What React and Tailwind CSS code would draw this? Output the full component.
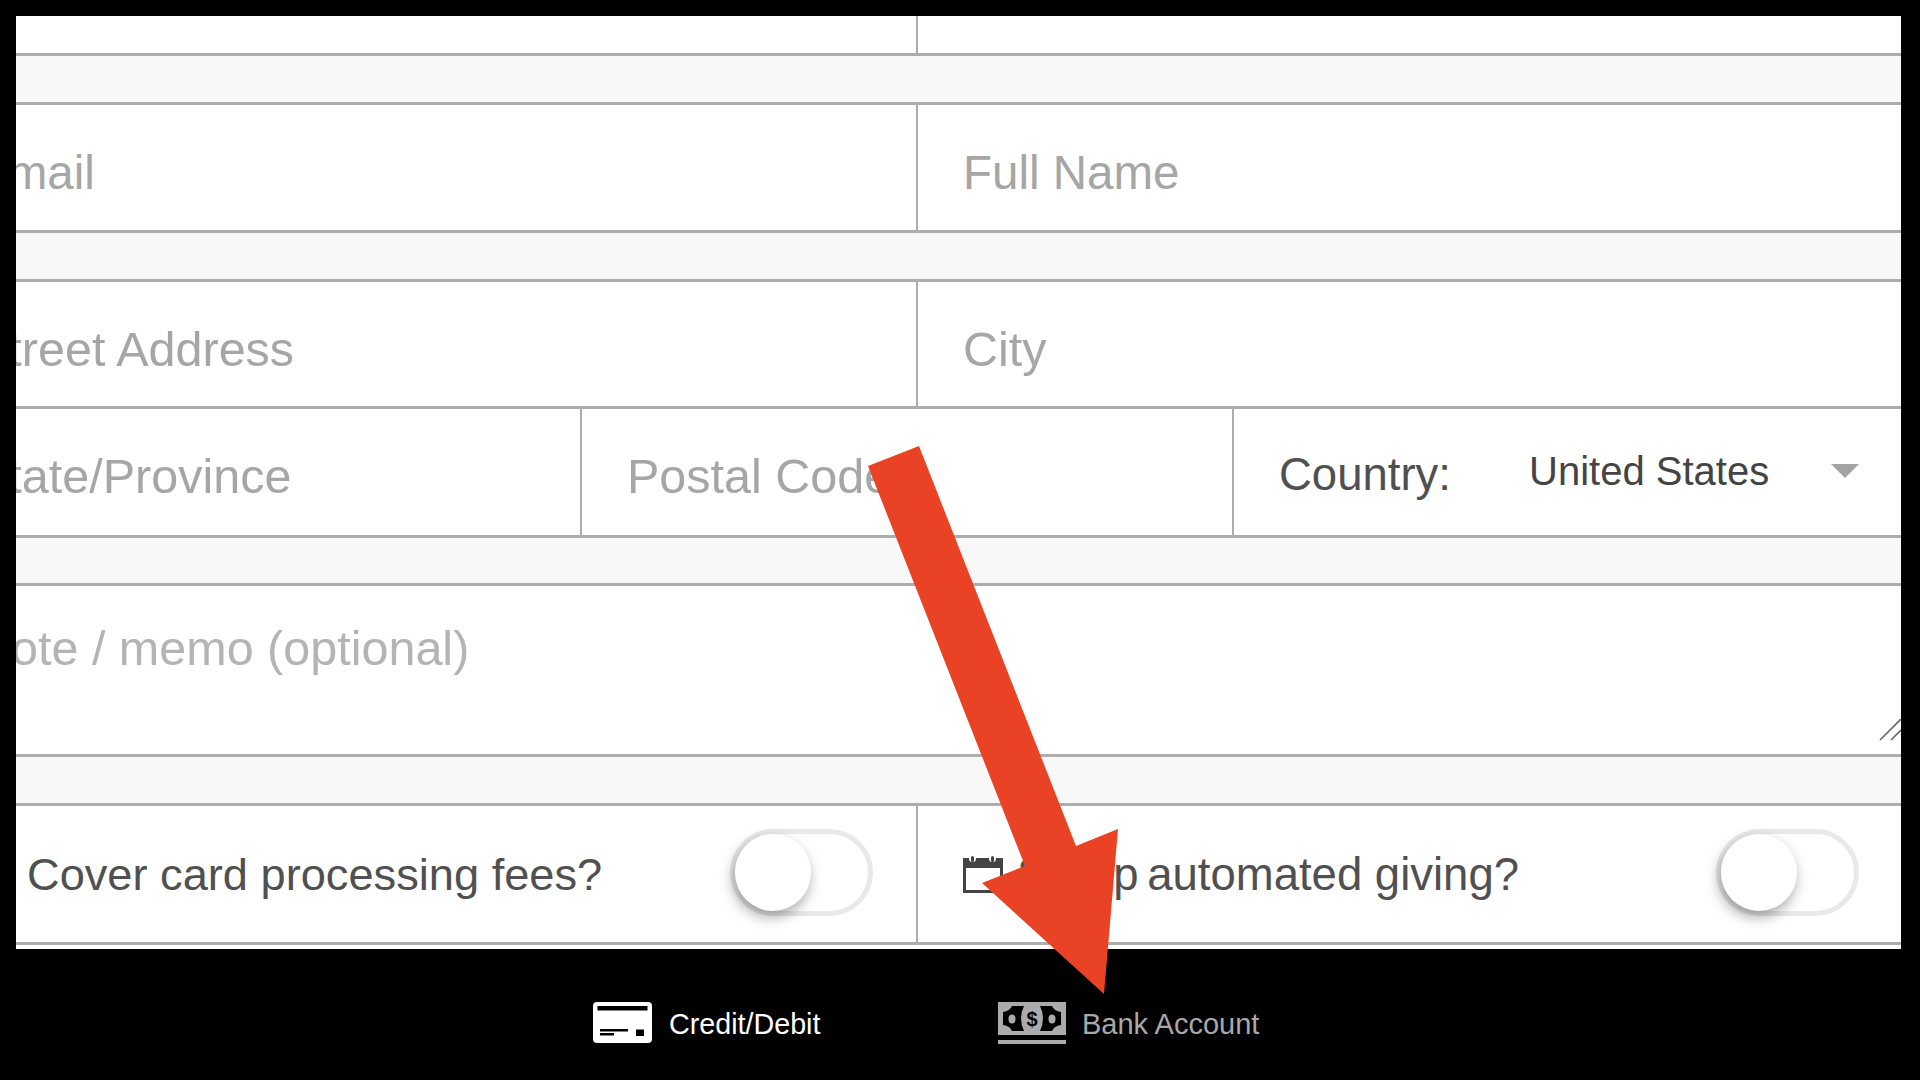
const font = { fontFamily: '"Liberation Sans", Arial, sans-serif' };

function Gap({ h }) {
  return <div className={`bg-[#f8f8f8] border-b-[3px] border-[#adadad] ${h}`} />;
}

function Toggle({ className }) {
  return (
    <div className={`relative w-[143px] h-[87px] shrink-0 rounded-full border-[5px] border-[#e9e9e9] bg-white ${className}`}>
      <div className="absolute left-0 top-0 w-[76px] h-[77px] rounded-full bg-white shadow-[-2px_6px_14px_rgba(0,0,0,0.35)]" />
    </div>
  );
}

function CardIcon() {
  return (
    <svg width="59" height="41" viewBox="0 0 59 41" className="shrink-0">
      <rect width="59" height="41" rx="4" fill="#fff" />
      <rect x="4.5" y="4" width="50" height="4.5" fill="#000" />
      <rect x="7" y="27" width="28" height="2.5" fill="#000" />
      <rect x="7" y="31" width="14" height="2.5" fill="#000" />
      <rect x="43" y="27.5" width="8" height="6.5" fill="#000" />
    </svg>
  );
}

function BankIcon() {
  return (
    <svg width="68" height="42" viewBox="0 0 68 42" className="shrink-0">
      <rect width="68" height="33" fill="#ababab" />
      <rect y="38" width="68" height="4" fill="#ababab" />
      <path d="M5 10 Q12 9 14 4 L26 4 Q20 16 26 29 L14 29 Q12 24 5 23 Z" fill="#000" />
      <path d="M63 10 Q56 9 54 4 L42 4 Q48 16 42 29 L54 29 Q56 24 63 23 Z" fill="#000" />
      <ellipse cx="14" cy="17" rx="3.5" ry="4.5" fill="#ababab" />
      <ellipse cx="54" cy="17" rx="3.5" ry="4.5" fill="#ababab" />
      <text x="34" y="24" textAnchor="middle" fontSize="20" fontWeight="700" fill="#000" fontFamily="Liberation Sans">$</text>
    </svg>
  );
}

function CalendarIcon() {
  return (
    <svg width="40" height="38" viewBox="0 0 40 38" className="shrink-0">
      <path d="M0 3H40V38H0Z" fill="#444" />
      <rect x="3" y="13" width="34" height="22" fill="#fff" />
      <circle cx="9.5" cy="3.5" r="3.5" fill="#fff" />
      <circle cx="29.5" cy="3.5" r="3.5" fill="#fff" />
      <rect x="8" y="1" width="3" height="6" rx="1.5" fill="#444" />
      <rect x="28" y="1" width="3" height="6" rx="1.5" fill="#444" />
    </svg>
  );
}

export default function App() {
  return (
    <div className="relative w-[1920px] h-[1080px] bg-black overflow-hidden" style={font}>
      <div className="pt-[16px] pl-[16px]">
        <div className="w-[1885px] h-[933px] bg-white overflow-hidden">
          <div className="-ml-[86px] w-[1971px]">
            <div className="flex h-[40px] border-b-[3px] border-[#adadad]">
              <div className="w-[988px] border-r-[2px] border-[#adadad]" />
            </div>
            <Gap h="h-[49px]" />
            <div className="flex h-[128px] border-b-[3px] border-[#adadad] text-[47.5px] text-[#a6a6a6]">
              <div className="w-[988px] border-r-[2px] border-[#adadad] pl-[46px] pt-[10px] flex items-center">Email</div>
              <div className="flex-1 pl-[45px] pt-[10px] flex items-center">Full Name</div>
            </div>
            <Gap h="h-[49px]" />
            <div className="flex h-[127px] border-b-[3px] border-[#adadad] text-[48.5px] text-[#a6a6a6]">
              <div className="w-[988px] border-r-[2px] border-[#adadad] pl-[46px] pt-[10px] flex items-center">Street Address</div>
              <div className="flex-1 pl-[45px] pt-[10px] flex items-center">City</div>
            </div>
            <div className="flex h-[129px] border-b-[3px] border-[#adadad] text-[48.5px] text-[#a6a6a6]">
              <div className="w-[652px] border-r-[2px] border-[#adadad] pl-[46px] pt-[8px] flex items-center">State/Province</div>
              <div className="w-[652px] border-r-[2px] border-[#adadad] pl-[45px] pt-[8px] flex items-center">Postal Code</div>
              <div className="flex-1 flex items-center pl-[45px] text-[#505050]">
                <span className="text-[45.5px] w-[250px] pt-[6px]">Country:</span>
                <span className="text-[40px] text-[#444] w-[302px] -mt-[2px]">United States</span>
                <span className="w-0 h-0 border-x-[14px] border-x-transparent border-t-[14px] border-t-[#a3a3a3] -mt-[2px]" />
              </div>
            </div>
            <Gap h="h-[48px]" />
            <div className="relative h-[171px] border-b-[3px] border-[#adadad] pl-[46px] pt-[29px] text-[48.5px] leading-[66px] text-[#b4b4b4]">
              Note / memo (optional)
              <svg width="22" height="22" viewBox="0 0 22 22" className="absolute right-0 top-[133px]">
                <path d="M1 21L22 0M12 21L22 11" stroke="#666" strokeWidth="1.6" fill="none" />
              </svg>
            </div>
            <Gap h="h-[49px]" />
            <div className="flex h-[139px] border-b-[3px] border-[#adadad] text-[#505050]">
              <div className="w-[988px] border-r-[2px] border-[#adadad] pl-[97px] flex items-center">
                <span className="w-[703px] pt-[2px] text-[45.2px]">Cover card processing fees?</span>
                <Toggle className="-mt-[3px]" />
              </div>
              <div className="flex-1 pl-[45px] flex items-center">
                <CalendarIcon />
                <span className="ml-[14px] w-[699px] pt-[2px] text-[45.5px]">
                  <span className="tracking-[-2px]">Set up </span>automated giving?
                </span>
                <Toggle className="-mt-[3px]" />
              </div>
            </div>
          </div>
        </div>
        <div className="flex items-center h-[41px] mt-[53px] ml-[577px]">
          <CardIcon />
          <span className="ml-[17px] w-[329px] pt-[5px] text-[28.7px] text-white">Credit/Debit</span>
          <BankIcon />
          <span className="ml-[16px] pt-[5px] text-[29px] text-[#a8a8a8]">Bank Account</span>
        </div>
      </div>
      <svg width="1920" height="1080" viewBox="0 0 1920 1080" className="absolute left-0 top-0 pointer-events-none">
        <polygon points="868,466 919,446 1076,846 1118,829 1104,994 982,883 1025,866" fill="#e94225" />
      </svg>
    </div>
  );
}
